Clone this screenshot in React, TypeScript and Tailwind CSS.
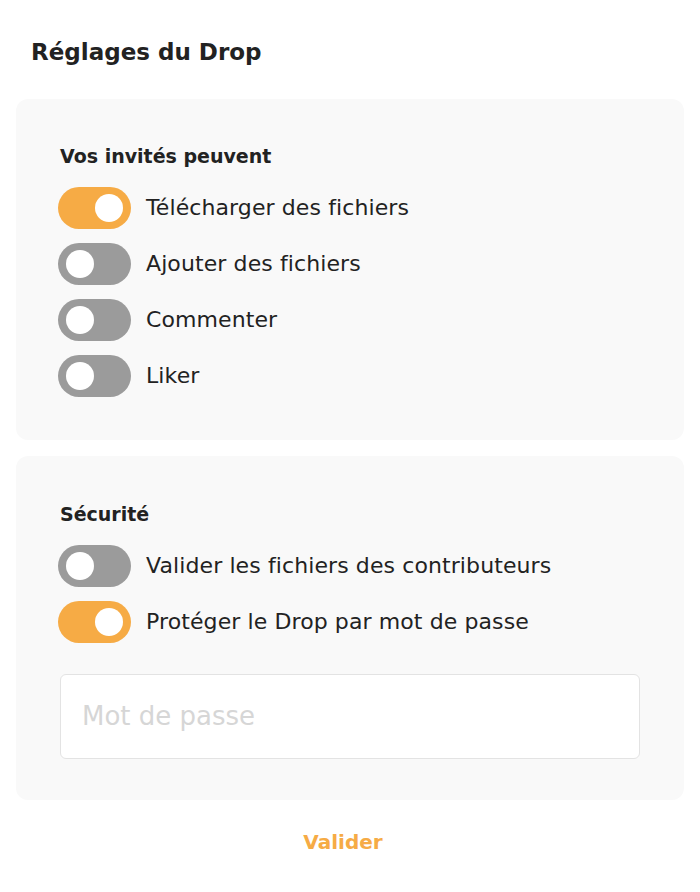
import React from "react";

function Toggle({ on }: { on: boolean }) {
  return (
    <div
      className={
        "flex h-[42px] w-[73px] shrink-0 items-center rounded-full px-[8px] " +
        (on ? "justify-end bg-[#f6ab45]" : "justify-start bg-[#9b9b9b]")
      }
    >
      <div className="h-[28px] w-[28px] rounded-full bg-white" />
    </div>
  );
}

function Row({ on, label }: { on: boolean; label: string }) {
  return (
    <div className="flex items-center gap-[15px]">
      <Toggle on={on} />
      <span className="text-[22px] leading-[26px] tracking-[0.1px] text-[#222]">{label}</span>
    </div>
  );
}

export default function App() {
  return (
    <div
      className="min-h-[892px] bg-white px-[16px] pt-[36px] text-[#222]"
      style={{ fontFamily: "'DejaVu Sans', 'Noto Sans', sans-serif" }}
    >
      <h1 className="pl-[15px] text-[23px] font-bold leading-[32px] text-[#222]">
        Réglages du Drop
      </h1>
      <div className="mt-[31px] rounded-[12px] bg-[#f9f9f9] pb-[43px] pl-[42px] pr-[44px] pt-[45px]">
        <h2 className="pl-[2px] text-[19px] font-bold leading-[24px]">Vos invités peuvent</h2>
        <div className="mt-[19px] flex flex-col gap-[14px]">
          <Row on={true} label="Télécharger des fichiers" />
          <Row on={false} label="Ajouter des fichiers" />
          <Row on={false} label="Commenter" />
          <Row on={false} label="Liker" />
        </div>
      </div>
      <div className="mt-[16px] rounded-[12px] bg-[#f9f9f9] pb-[41px] pl-[42px] pr-[44px] pt-[46px]">
        <h2 className="pl-[2px] text-[19px] font-bold leading-[24px]">Sécurité</h2>
        <div className="mt-[19px] flex flex-col gap-[14px]">
          <Row on={false} label="Valider les fichiers des contributeurs" />
          <Row on={true} label="Protéger le Drop par mot de passe" />
        </div>
        <div className="mt-[31px] ml-[2px] flex h-[85px] items-center rounded-[6px] border border-[#e3e3e3] bg-white px-[21px]">
          <span className="text-[26px] text-[#d6d6d6]">Mot de passe</span>
        </div>
      </div>
      <div className="flex justify-center pt-[30px]">
        <span className="ml-[-14px] text-[20px] font-bold leading-[24px] text-[#f6ab45]">Valider</span>
      </div>
    </div>
  );
}
